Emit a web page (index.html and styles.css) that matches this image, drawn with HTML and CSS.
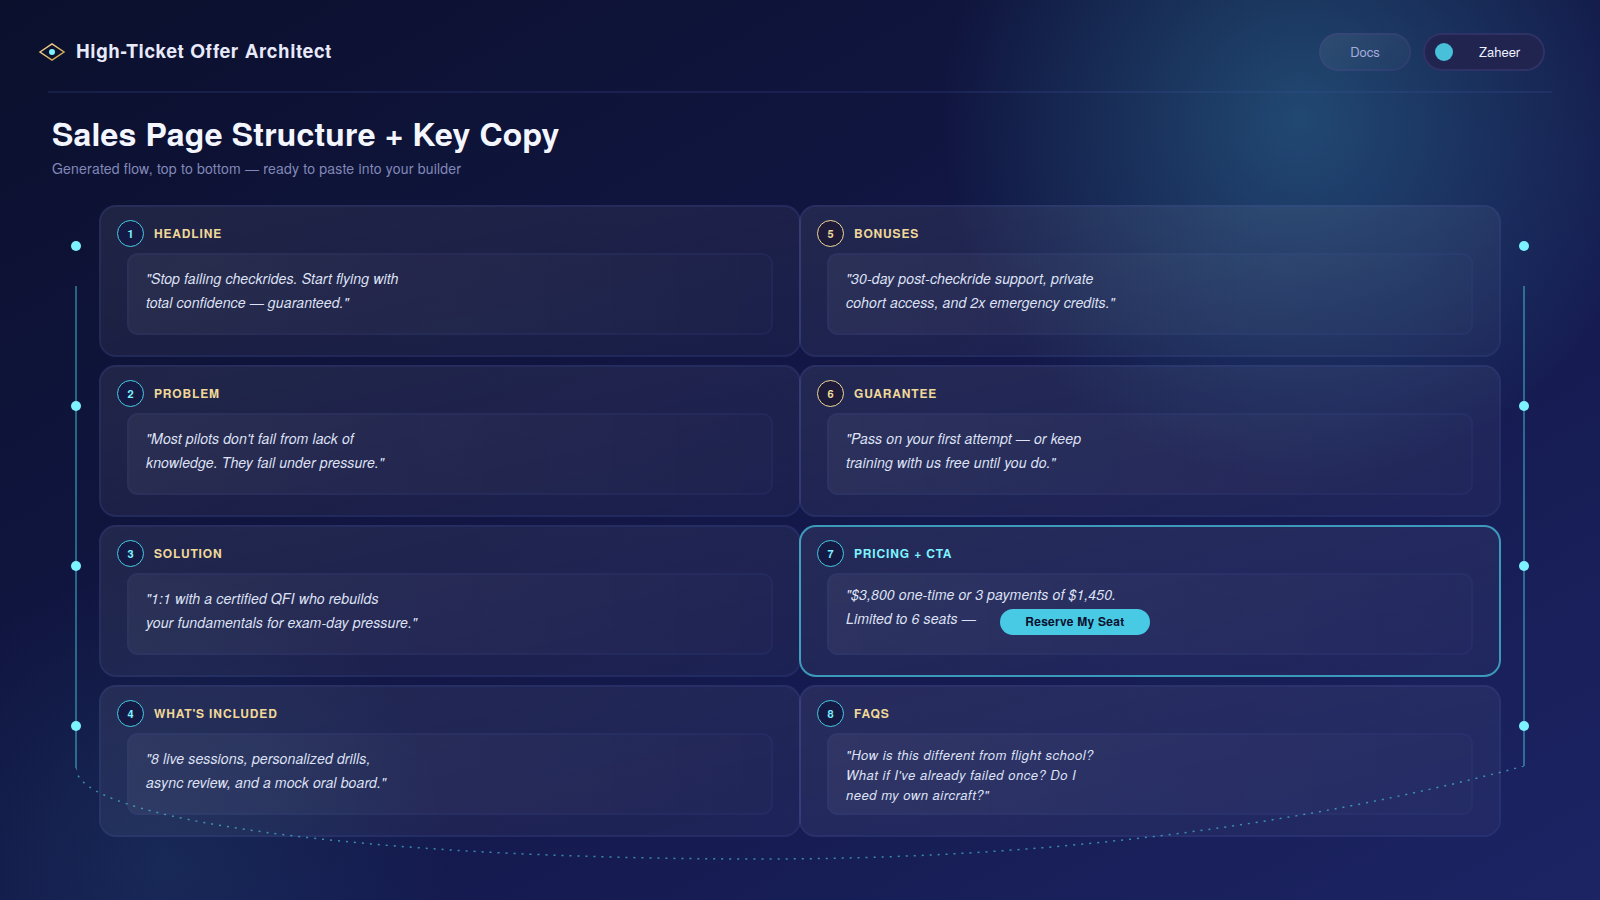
FILE: index.html
```html
<!DOCTYPE html>
<html lang="en">
<head>
    <meta charset="UTF-8">
    <meta name="viewport" content="width=device-width, initial-scale=1.0">
    <title>High-Ticket Offer Architect</title>

    <link rel="stylesheet" href="styles.css">
</head>

<body>
    <header class="topbar">
        <a class="brand" href="#">
            <svg class="logo" width="28" height="20" viewBox="0 0 28 20">
                <defs>
                    <linearGradient id="gold" x1="0" y1="0" x2="1" y2="1">
                        <stop offset="0" stop-color="#f5dd9a"/>
                        <stop offset="1" stop-color="#c9973f"/>
                    </linearGradient>
                </defs>
                <path d="M2 10 L14 2 L26 10 L14 18 Z" fill="none" stroke="url(#gold)" stroke-width="1.5"/>
                <circle cx="14" cy="10" r="3" fill="#7df3ff"/>
            </svg>
            <span>High-Ticket Offer Architect</span>
        </a>
        <nav class="actions">
            <a class="pill docs" href="#">Docs</a>
            <button class="pill user" type="button"><span class="avatar"></span><span class="name">Zaheer</span></button>
        </nav>
    </header>

    <main>
        <div class="intro">
            <h1>Sales Page Structure + Key Copy</h1>
            <p>Generated flow, top to bottom — ready to paste into your builder</p>
        </div>

        <div class="board">
            <div class="rail rail-left"><span></span><span></span><span></span><span></span></div>

            <div class="cards">
                <section class="card">
                    <div class="card-head"><span class="num">1</span><h2>HEADLINE</h2></div>
                    <p class="quote">"Stop failing checkrides. Start flying with<br>total confidence — guaranteed."</p>
                </section>
                <section class="card">
                    <div class="card-head"><span class="num">2</span><h2>PROBLEM</h2></div>
                    <p class="quote">"Most pilots don't fail from lack of<br>knowledge. They fail under pressure."</p>
                </section>
                <section class="card">
                    <div class="card-head"><span class="num">3</span><h2>SOLUTION</h2></div>
                    <p class="quote">"1:1 with a certified QFI who rebuilds<br>your fundamentals for exam-day pressure."</p>
                </section>
                <section class="card">
                    <div class="card-head"><span class="num">4</span><h2>WHAT'S INCLUDED</h2></div>
                    <p class="quote">"8 live sessions, personalized drills,<br>async review, and a mock oral board."</p>
                </section>
                <section class="card">
                    <div class="card-head"><span class="num gold">5</span><h2>BONUSES</h2></div>
                    <p class="quote">"30-day post-checkride support, private<br>cohort access, and 2x emergency credits."</p>
                </section>
                <section class="card">
                    <div class="card-head"><span class="num gold">6</span><h2>GUARANTEE</h2></div>
                    <p class="quote">"Pass on your first attempt — or keep<br>training with us free until you do."</p>
                </section>
                <section class="card featured">
                    <div class="card-head"><span class="num">7</span><h2>PRICING + CTA</h2></div>
                    <div class="quote offer">
                        <p>"$3,800 one-time or 3 payments of $1,450.</p>
                        <div class="offer-row">
                            <p>Limited to 6 seats —</p>
                            <button class="cta" type="button">Reserve My Seat</button>
                        </div>
                    </div>
                </section>
                <section class="card">
                    <div class="card-head"><span class="num">8</span><h2>FAQS</h2></div>
                    <p class="quote small">"How is this different from flight school?<br>What if I've already failed once? Do I<br>need my own aircraft?"</p>
                </section>
            </div>

            <div class="rail rail-right"><span></span><span></span><span></span><span></span></div>

            <!-- dotted link from the end of the left rail to the right one -->
            <svg class="link" viewBox="0 0 1448 100" preserveAspectRatio="none">
                <path d="M0 2 C0 53 284 93 684 93 Q1102 93 1448 0"/>
            </svg>
        </div>
    </main>
</body>
</html>
```
FILE: styles.css
```css
* {
    box-sizing: border-box;
}

body {
    margin: 0;
    min-height: 100vh;
    font-family: "Nimbus Sans", "TeX Gyre Heros", FreeSans, "Liberation Sans", Arial, sans-serif;
    color: #f4f6ff;
    background:
        radial-gradient(circle 360px at 81.25% 120px, rgba(72, 202, 228, 0.28), rgba(72, 202, 228, 0)),
        radial-gradient(circle 290px at 160px 860px, rgba(72, 202, 228, 0.09), rgba(72, 202, 228, 0)),
        linear-gradient(to bottom right, #0b102d, #121746 48%, #1c2464);
}

h1, h2, p {
    margin: 0;
}

.topbar {
    display: flex;
    justify-content: space-between;
    align-items: center;
    height: 93px;
    margin: 0 48px;
    padding: 12px 7px 0 0;
    border-bottom: 2px solid rgba(70, 85, 170, 0.2);
}

.brand {
    display: flex;
    align-items: center;
    gap: 10px;
    margin-left: -10px;
    color: #e8eafa;
    font-size: 19px;
    font-weight: bold;
    letter-spacing: 0.03em;
    text-decoration: none;
}

.brand span {
    padding-bottom: 2px;
}

.actions {
    display: flex;
    gap: 12px;
}

.pill {
    display: flex;
    align-items: center;
    justify-content: center;
    height: 38px;
    border: 2px solid rgba(110, 110, 190, 0.2);
    border-radius: 19px;
    font-family: inherit;
    font-size: 13px;
    text-decoration: none;
}

.docs {
    width: 92px;
    border-color: rgba(90, 70, 150, 0.22);
    color: #a3acdc;
    background: linear-gradient(to bottom right, rgba(255, 255, 255, 0.08), rgba(255, 255, 255, 0.02)) border-box;
}

.user {
    justify-content: flex-start;
    gap: 26px;
    min-width: 122px;
    padding: 0 22px 0 10px;
    color: #eef0ff;
    background: #20244f;
    cursor: pointer;
}

.avatar {
    width: 18px;
    height: 18px;
    border-radius: 50%;
    background: #48c0da;
}

.intro {
    padding: 22px 52px 0;
}

.intro h1 {
    font-size: 32px;
    line-height: 36px;
    letter-spacing: 0.005em;
}

.intro p {
    margin-top: 8px;
    font-size: 14px;
    line-height: 18px;
    letter-spacing: 0.015em;
    color: #8289b8;
}

.board {
    position: relative;
    display: flex;
    gap: 18px;
    padding: 28px 71px 40px;
}

.rail {
    position: relative;
    display: grid;
    grid-template-rows: repeat(4, 1fr);
    gap: 8px;
    width: 10px;
}

.rail span {
    position: relative;
    width: 10px;
    height: 10px;
    margin-top: 36px;
    border-radius: 50%;
    background: #7df3ff;
}

.rail::before {
    content: "";
    position: absolute;
    top: 81px;
    bottom: 69px;
    left: 4px;
    width: 2px;
    background: rgba(72, 202, 228, 0.45);
}

.rail-right::before {
    bottom: 71px;
}

.cards {
    flex: 1;
    display: grid;
    grid-template-columns: 1fr 1fr;
    grid-template-rows: repeat(4, auto);
    grid-auto-flow: column;
    gap: 8px 0;
}

.card {
    padding: 13px 26px 20px 16px;
    border: 2px solid rgba(64, 78, 165, 0.2);
    border-radius: 17px;
    background: linear-gradient(to bottom right, rgba(255, 255, 255, 0.08), rgba(255, 255, 255, 0.03)) border-box;
}

/* the two columns share one border line */
.card:nth-child(-n+4) {
    margin-right: -1px;
}

.card:nth-child(n+5) {
    margin-left: -1px;
}

.card-head {
    display: flex;
    align-items: center;
    gap: 10px;
}

.num {
    display: flex;
    align-items: center;
    justify-content: center;
    width: 27px;
    height: 27px;
    border: 1px solid #48cae4;
    border-radius: 50%;
    background: #151a45;
    color: #7df3ff;
    font-size: 11px;
    font-weight: bold;
}

.num.gold {
    border-color: #f0d998;
    background: #1d1a3a;
    color: #f0d998;
}

.card h2 {
    padding-bottom: 2px;
    font-size: 12px;
    letter-spacing: 0.07em;
    color: #f0d998;
}

.quote {
    min-height: 82px;
    margin: 6px 0 0 10px;
    padding: 11px 17px 8px;
    border: 2px solid rgba(64, 78, 165, 0.13);
    border-radius: 11px;
    background: linear-gradient(to right, rgba(255, 255, 255, 0.05), rgba(255, 255, 255, 0.01)) border-box;
    color: #dfe2f6;
    font-size: 14px;
    font-style: italic;
    letter-spacing: 0.01em;
    line-height: 24px;
}

.quote.small {
    padding-top: 10px;
    font-size: 13px;
    letter-spacing: 0.04em;
    line-height: 20px;
}

.quote.offer {
    padding-top: 7px;
}

.offer-row {
    display: flex;
    align-items: flex-start;
    gap: 24px;
}

.cta {
    width: 150px;
    height: 26px;
    margin-top: 3px;
    padding: 0 0 2px;
    border: none;
    border-radius: 13px;
    background: #48cae4;
    color: #0b1030;
    font-family: inherit;
    font-size: 12px;
    font-weight: bold;
    letter-spacing: 0.02em;
    cursor: pointer;
}

.featured {
    border-color: rgba(72, 202, 228, 0.7);
}

.featured h2 {
    color: #7df3ff;
}

.link {
    position: absolute;
    left: 76px;
    bottom: 11px;
    width: calc(100% - 152px);
    height: 100px;
    pointer-events: none;
}

.link path {
    fill: none;
    stroke: #48cae4;
    stroke-width: 1.5;
    stroke-dasharray: 2 6;
    opacity: 0.65;
}
```
